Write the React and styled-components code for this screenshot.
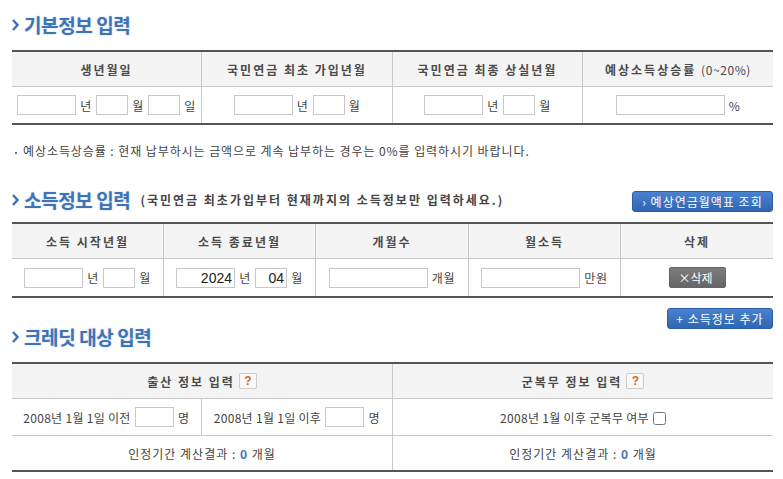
import React from "react";
import styled, { createGlobalStyle } from "styled-components";

const Global = createGlobalStyle`
  html, body { margin: 0; padding: 0; background: #fff; }
  body { font-family: "Noto Sans CJK KR", "Liberation Sans", sans-serif; font-size: 12px; color: #444; }
`;

const Page = styled.div`
  width: 761px;
  margin-left: 12px;
`;

const TitleBar = styled.div`
  display: flex;
  align-items: ${(p) => p.$align || "center"};
  height: ${(p) => p.$height}px;
  padding-bottom: ${(p) => p.$bottom || 0}px;
  box-sizing: border-box;
`;

const Title = styled.h2`
  display: flex;
  align-items: center;
  gap: 5px;
  margin: 0 0 ${(p) => p.$lift || 0}px;
  font-size: 19px;
  line-height: ${(p) => p.$lh || 20}px;
  font-weight: 700;
  color: #3f73b7;
  letter-spacing: -0.4px;
  white-space: nowrap;
  text-shadow: 0 0 2px rgba(63, 115, 183, 0.35);
`;

const Chevron = styled.svg`
  width: 7px;
  height: 12px;
  flex: none;
`;

const Sub = styled.span`
  margin-left: 5px;
  font-size: 12px;
  font-weight: 700;
  color: #444;
  letter-spacing: 2px;
  white-space: nowrap;
  text-shadow: none;
`;

const BlueButton = styled.button`
  margin-left: auto;
  width: ${(p) => p.$width}px;
  height: 21px;
  padding: 0;
  border: 1px solid #2b5ea6;
  border-radius: 3px;
  background: linear-gradient(#4a82cf, #2f66b3);
  color: #fff;
  font: 12px "Noto Sans CJK KR", sans-serif;
  letter-spacing: 1px;
  white-space: nowrap;
`;

const Table = styled.table`
  width: 761px;
  table-layout: fixed;
  border-collapse: separate;
  border-spacing: 0;
  border-top: 2px solid #555;
  border-bottom: 2px solid #555;
`;

const Th = styled.th`
  height: 35px;
  padding: 0;
  background: #f4f4f4;
  border-bottom: 1px solid #c8c8c8;
  border-left: ${(p) => (p.$first ? "none" : "1px solid #c8c8c8")};
  font-size: 12px;
  font-weight: 700;
  color: #4a4a4a;
  letter-spacing: 2px;
  box-sizing: border-box;
`;

const Td = styled.td`
  height: ${(p) => p.$h || 37}px;
  padding: 0;
  text-align: center;
  border-left: ${(p) => (p.$first ? "none" : "1px solid #c8c8c8")};
  border-bottom: ${(p) => (p.$line ? "1px solid #c8c8c8" : "none")};
  letter-spacing: 0.3px;
  box-sizing: border-box;
`;

const Cell = styled.div`
  display: flex;
  justify-content: center;
  align-items: center;
  gap: ${(p) => p.$gap ?? 4}px;
  white-space: nowrap;
`;

const Field = styled.input`
  width: ${(p) => p.$w}px;
  height: 20px;
  box-sizing: border-box;
  padding: 0 2px;
  border: 1px solid #c8c8c8;
  background: #fff;
  text-align: right;
  color: #222;
  font: 14px "Liberation Sans", sans-serif;
  outline: none;
`;

const Unit = styled.span`
  display: inline-block;
  min-width: 12px;
  letter-spacing: 0.6px;
`;

const Light = styled.span`
  font-weight: 400;
  letter-spacing: 0.6px;
`;

const Note = styled.p`
  margin: 14px 0 0 3px;
  height: 24px;
  line-height: 24px;
  font-size: 12px;
  letter-spacing: 0.92px;
  white-space: nowrap;
  &::before {
    content: "";
    display: inline-block;
    width: 2px;
    height: 2px;
    margin-right: 6px;
    vertical-align: middle;
    background: #3f73b7;
  }
`;

const GrayButton = styled.button`
  width: 57px;
  height: 21px;
  padding: 0 3px 0 0;
  border: 1px solid #666;
  border-radius: 2px;
  background: linear-gradient(#7c7c7c, #666);
  color: #fff;
  font: 12px "Noto Sans CJK KR", sans-serif;
`;

const AddRow = styled.div`
  display: flex;
  margin-top: 10px;
`;

const Help = styled.span`
  display: inline-flex;
  align-items: center;
  justify-content: center;
  width: 18px;
  height: 16px;
  box-sizing: border-box;
  border: 1px solid #ccc;
  border-radius: 2px;
  background: #fafafa;
  color: #d2691e;
  font: 700 12px "Liberation Sans", sans-serif;
  letter-spacing: 0;
`;

const Check = styled.input`
  width: 13px;
  height: 13px;
  margin: 3px 0 0 0;
`;

const Result = styled.span`
  letter-spacing: 1px;
`;

const Zero = styled.b`
  color: #3f73b7;
`;

const Arrow = () => (
  <Chevron viewBox="0 0 7 12">
    <path d="M1 1 L5.5 6 L1 11" fill="none" stroke="#3f73b7" strokeWidth="2.4" />
  </Chevron>
);

const Cols = ({ widths }) => (
  <colgroup>
    {widths.map((w, i) => (
      <col key={i} style={{ width: w }} />
    ))}
  </colgroup>
);

export default function App() {
  return (
    <Page>
      <Global />
      <TitleBar $height={50}>
        <Title><Arrow />기본정보 입력</Title>
      </TitleBar>
      <Table>
        <Cols widths={[189, 191, 190, 191]} />
        <thead>
          <tr>
            <Th $first>생년월일</Th>
            <Th>국민연금 최초 가입년월</Th>
            <Th>국민연금 최종 상실년월</Th>
            <Th>예상소득상승률 <Light>(0~20%)</Light></Th>
          </tr>
        </thead>
        <tbody>
          <tr>
            <Td $first $h={36}>
              <Cell>
                <Field $w={59} /><Unit>년</Unit><Field $w={32} /><Unit>월</Unit><Field $w={32} /><Unit>일</Unit>
              </Cell>
            </Td>
            <Td $h={36}>
              <Cell>
                <Field $w={59} /><Unit>년</Unit><Field $w={32} /><Unit>월</Unit>
              </Cell>
            </Td>
            <Td $h={36}>
              <Cell>
                <Field $w={59} /><Unit>년</Unit><Field $w={32} /><Unit>월</Unit>
              </Cell>
            </Td>
            <Td $h={36}>
              <Cell>
                <Field $w={109} /><Unit>%</Unit>
              </Cell>
            </Td>
          </tr>
        </tbody>
      </Table>
      <Note>예상소득상승률 : 현재 납부하시는 금액으로 계속 납부하는 경우는 0%를 입력하시기 바랍니다.</Note>
      <TitleBar $height={59} $align="flex-end" $bottom={10}>
        <Title as="div" $lift={2}>
          <Arrow />
          <span>소득정보 입력</span>
          <Sub>(국민연금 최초가입부터 현재까지의 소득정보만 입력하세요.)</Sub>
        </Title>
        <BlueButton $width={141}>› 예상연금월액표 조회</BlueButton>
      </TitleBar>
      <Table>
        <Cols widths={[151, 152, 153, 152, 153]} />
        <thead>
          <tr>
            <Th $first>소득 시작년월</Th>
            <Th>소득 종료년월</Th>
            <Th>개월수</Th>
            <Th>월소득</Th>
            <Th>삭제</Th>
          </tr>
        </thead>
        <tbody>
          <tr>
            <Td $first>
              <Cell>
                <Field $w={59} /><Unit>년</Unit><Field $w={32} /><Unit>월</Unit>
              </Cell>
            </Td>
            <Td>
              <Cell>
                <Field $w={59} defaultValue="2024" /><Unit>년</Unit><Field $w={32} defaultValue="04" /><Unit>월</Unit>
              </Cell>
            </Td>
            <Td>
              <Cell>
                <Field $w={99} /><Unit>개월</Unit>
              </Cell>
            </Td>
            <Td>
              <Cell>
                <Field $w={99} /><Unit>만원</Unit>
              </Cell>
            </Td>
            <Td>
              <Cell>
                <GrayButton>×삭제</GrayButton>
              </Cell>
            </Td>
          </tr>
        </tbody>
      </Table>
      <AddRow>
        <BlueButton $width={106}>+ 소득정보 추가</BlueButton>
      </AddRow>
      <TitleBar $height={33} $align="flex-start">
        <Title $lh={16}><Arrow />크레딧 대상 입력</Title>
      </TitleBar>
      <Table>
        <Cols widths={[189, 191, 381]} />
        <thead>
          <tr>
            <Th $first colSpan={2}>
              <Cell>출산 정보 입력 <Help>?</Help></Cell>
            </Th>
            <Th>
              <Cell>군복무 정보 입력 <Help>?</Help></Cell>
            </Th>
          </tr>
        </thead>
        <tbody>
          <tr>
            <Td $first $line>
              <Cell>2008년 1월 1일 이전 <Field $w={39} /> <Unit>명</Unit></Cell>
            </Td>
            <Td $line>
              <Cell>2008년 1월 1일 이후 <Field $w={39} /> <Unit>명</Unit></Cell>
            </Td>
            <Td $line>
              <Cell>2008년 1월 이후 군복무 여부 <Check type="checkbox" /></Cell>
            </Td>
          </tr>
          <tr>
            <Td $first colSpan={2} $h={34}><Result>인정기간 계산결과 : <Zero>0</Zero> 개월</Result></Td>
            <Td $h={34}><Result>인정기간 계산결과 : <Zero>0</Zero> 개월</Result></Td>
          </tr>
        </tbody>
      </Table>
    </Page>
  );
}
